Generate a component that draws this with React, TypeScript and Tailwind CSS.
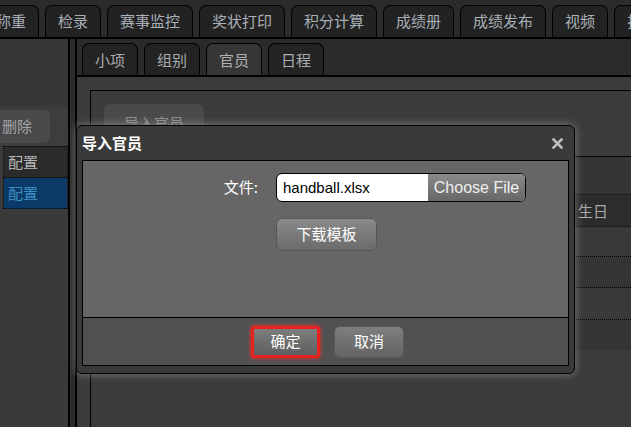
import React from "react";

const CJK = "font-['Microsoft_YaHei','Noto_Sans_CJK_SC',sans-serif]";

function TopTab({ label }: { label: string }) {
  return (
    <div className="h-[32px] shrink-0 px-3 border border-b-0 border-black rounded-t-[7px] bg-[#222222] text-[#a9b0b8] text-[15px] leading-[30px] whitespace-nowrap">
      {label}
    </div>
  );
}

function SubTab({ label, active }: { label: string; active?: boolean }) {
  return (
    <div
      className={
        "h-[32px] shrink-0 px-3 border border-b-0 border-black rounded-t-[7px] text-[15px] leading-[31px] whitespace-nowrap " +
        (active ? "bg-[#363636] text-[#b0b0b0]" : "bg-[#232323] text-[#a9acb0]")
      }
    >
      {label}
    </div>
  );
}

export default function App() {
  const topTabs = ["称重", "检录", "赛事监控", "奖状打印", "积分计算", "成绩册", "成绩发布", "视频", "排名"];
  return (
    <div className={"relative w-[631px] h-[427px] overflow-hidden bg-[#2c2c2c] " + CJK}>
      {/* top tab bar */}
      <div className="h-[39px] pt-[5px] border-b-2 border-black overflow-hidden bg-[#2b2b2b]">
        <div className="flex gap-[6px] -ml-[17px]">
          {topTabs.map((t) => (
            <TopTab key={t} label={t} />
          ))}
        </div>
      </div>

      {/* main */}
      <div className="flex h-[388px]">
        {/* left panel */}
        <div className="w-[68px] shrink-0 bg-[#3a3a3a] flex flex-col overflow-hidden">
          <div className="h-[68px] bg-[#373737]" />
          <div className="h-[39px] bg-[#3d3d3d] flex items-center">
            <div className="-ml-[16px] px-[18px] h-[33px] rounded-[6px] bg-[#4a4a4a] text-[#a3a3a3] text-[15px] flex items-center whitespace-nowrap">
              删除
            </div>
          </div>
          <div className="ml-[3px] w-[65px] border-l border-r border-dotted border-black">
            <div className="h-[32px] bg-[#2b2b2b] border-t border-b border-dotted border-black pl-[4px] text-[15px] leading-[30px] text-[#b5b5b5]">
              配置
            </div>
            <div className="h-[31px] bg-[#0a3a68] border-b border-dotted border-black pl-[4px] text-[15px] leading-[30px] text-[#3d8ec0]">
              配置
            </div>
          </div>
        </div>

        {/* splitter */}
        <div className="w-[9px] shrink-0 border-l-2 border-r-2 border-black bg-[#2c2c2c]" />

        {/* content */}
        <div className="flex-1 flex flex-col min-w-0">
          <div className="h-[38px] shrink-0 bg-[#2b2b2b] pt-[4px] pl-[5px] flex gap-[6px] border-b-2 border-black">
            <SubTab label="小项" />
            <SubTab label="组别" />
            <SubTab label="官员" active />
            <SubTab label="日程" />
          </div>
          <div className="flex-1 bg-[#3b3b3b] pl-[13px] pt-[13px] overflow-hidden">
            <div className="h-full border-l border-t border-black pt-[13px]">
              <div className="pl-[13px]">
                <div className="w-[100px] h-[38px] rounded-[6px] bg-[#4a4a4a] text-[#8a8a8a] text-[15px] flex items-center justify-center">
                  导入官员
                </div>
              </div>
              <div className="mt-[14px] border-t border-black">
                <div className="h-[37px] bg-[#343434]" />
                <div className="h-[33px] bg-[#2c2c2c] border-t border-b border-[#1c1c1c] flex">
                  <div className="w-[484px] shrink-0" />
                  <div className="pl-[3px] text-[15px] leading-[31px] text-[#a9a9a9] whitespace-nowrap">生日</div>
                </div>
                <div className="h-[30px] bg-[#393939] border-b border-dotted border-black" />
                <div className="h-[31px] bg-[#343434] border-b border-dotted border-black" />
                <div className="h-[32px] bg-[#393939] border-b border-dotted border-black" />
                <div className="h-[30px] bg-[#343434]" />
              </div>
            </div>
          </div>
        </div>
      </div>

      {/* modal */}
      <div className="absolute left-[76px] top-[125px] w-[499px] h-[249px] rounded-[6px] border border-black bg-[#3a3a3a] shadow-[0_0_10px_rgba(255,255,255,0.35)] flex flex-col">
        <div className="h-[34px] shrink-0 flex items-center justify-between pl-[5px] pr-[11px]">
          <span className="text-white font-bold text-[15px]">导入官员</span>
          <svg width="11" height="11" viewBox="0 0 11 11" className="mt-[1px]">
            <path d="M1.5 1.5 L9.5 9.5 M9.5 1.5 L1.5 9.5" stroke="#bdbdbd" strokeWidth="2.6" strokeLinecap="square" />
          </svg>
        </div>
        <div className="mx-[5px] border border-black flex flex-col">
          <div className="h-[157px] bg-[#666666] border-b border-black pt-[12px]">
            <div className="flex items-center">
              <div className="w-[175px] text-right text-white text-[15px]">文件:</div>
              <div className="ml-[18px] w-[250px] h-[29px] rounded-[6px] border border-black bg-white flex overflow-hidden">
                <div className="flex-1 pl-[6px] text-black text-[15px] leading-[27px] font-['Liberation_Sans',Arial,sans-serif]">
                  handball.xlsx
                </div>
                <div className="w-[97px] bg-linear-to-b from-[#8a8a8a] to-[#676767] text-[#f0f0f0] text-[16px] leading-[27px] text-center font-['Liberation_Sans',Arial,sans-serif]">
                  Choose File
                </div>
              </div>
            </div>
            <div className="mt-[16px] ml-[193px] w-[101px] h-[33px] rounded-[6px] border border-[#575757] bg-linear-to-b from-[#8a8a8a] to-[#6b6b6b] text-white text-[15px] flex items-center justify-center">
              下载模板
            </div>
          </div>
          <div className="h-[47px] bg-[#515151] flex items-center pl-[168px]">
            <div className="w-[69px] h-[32px] rounded-[3px] border-[3px] border-[#e8231f] shadow-[0_0_4px_#ff3030] bg-linear-to-b from-[#7d7d7d] to-[#5f5f5f] text-white text-[15px] flex items-center justify-center">
              确定
            </div>
            <div className="ml-[14px] w-[70px] h-[32px] rounded-[6px] border border-[#5a5a5a] bg-linear-to-b from-[#7f7f7f] to-[#636363] text-white text-[15px] flex items-center justify-center">
              取消
            </div>
          </div>
        </div>
      </div>
    </div>
  );
}
